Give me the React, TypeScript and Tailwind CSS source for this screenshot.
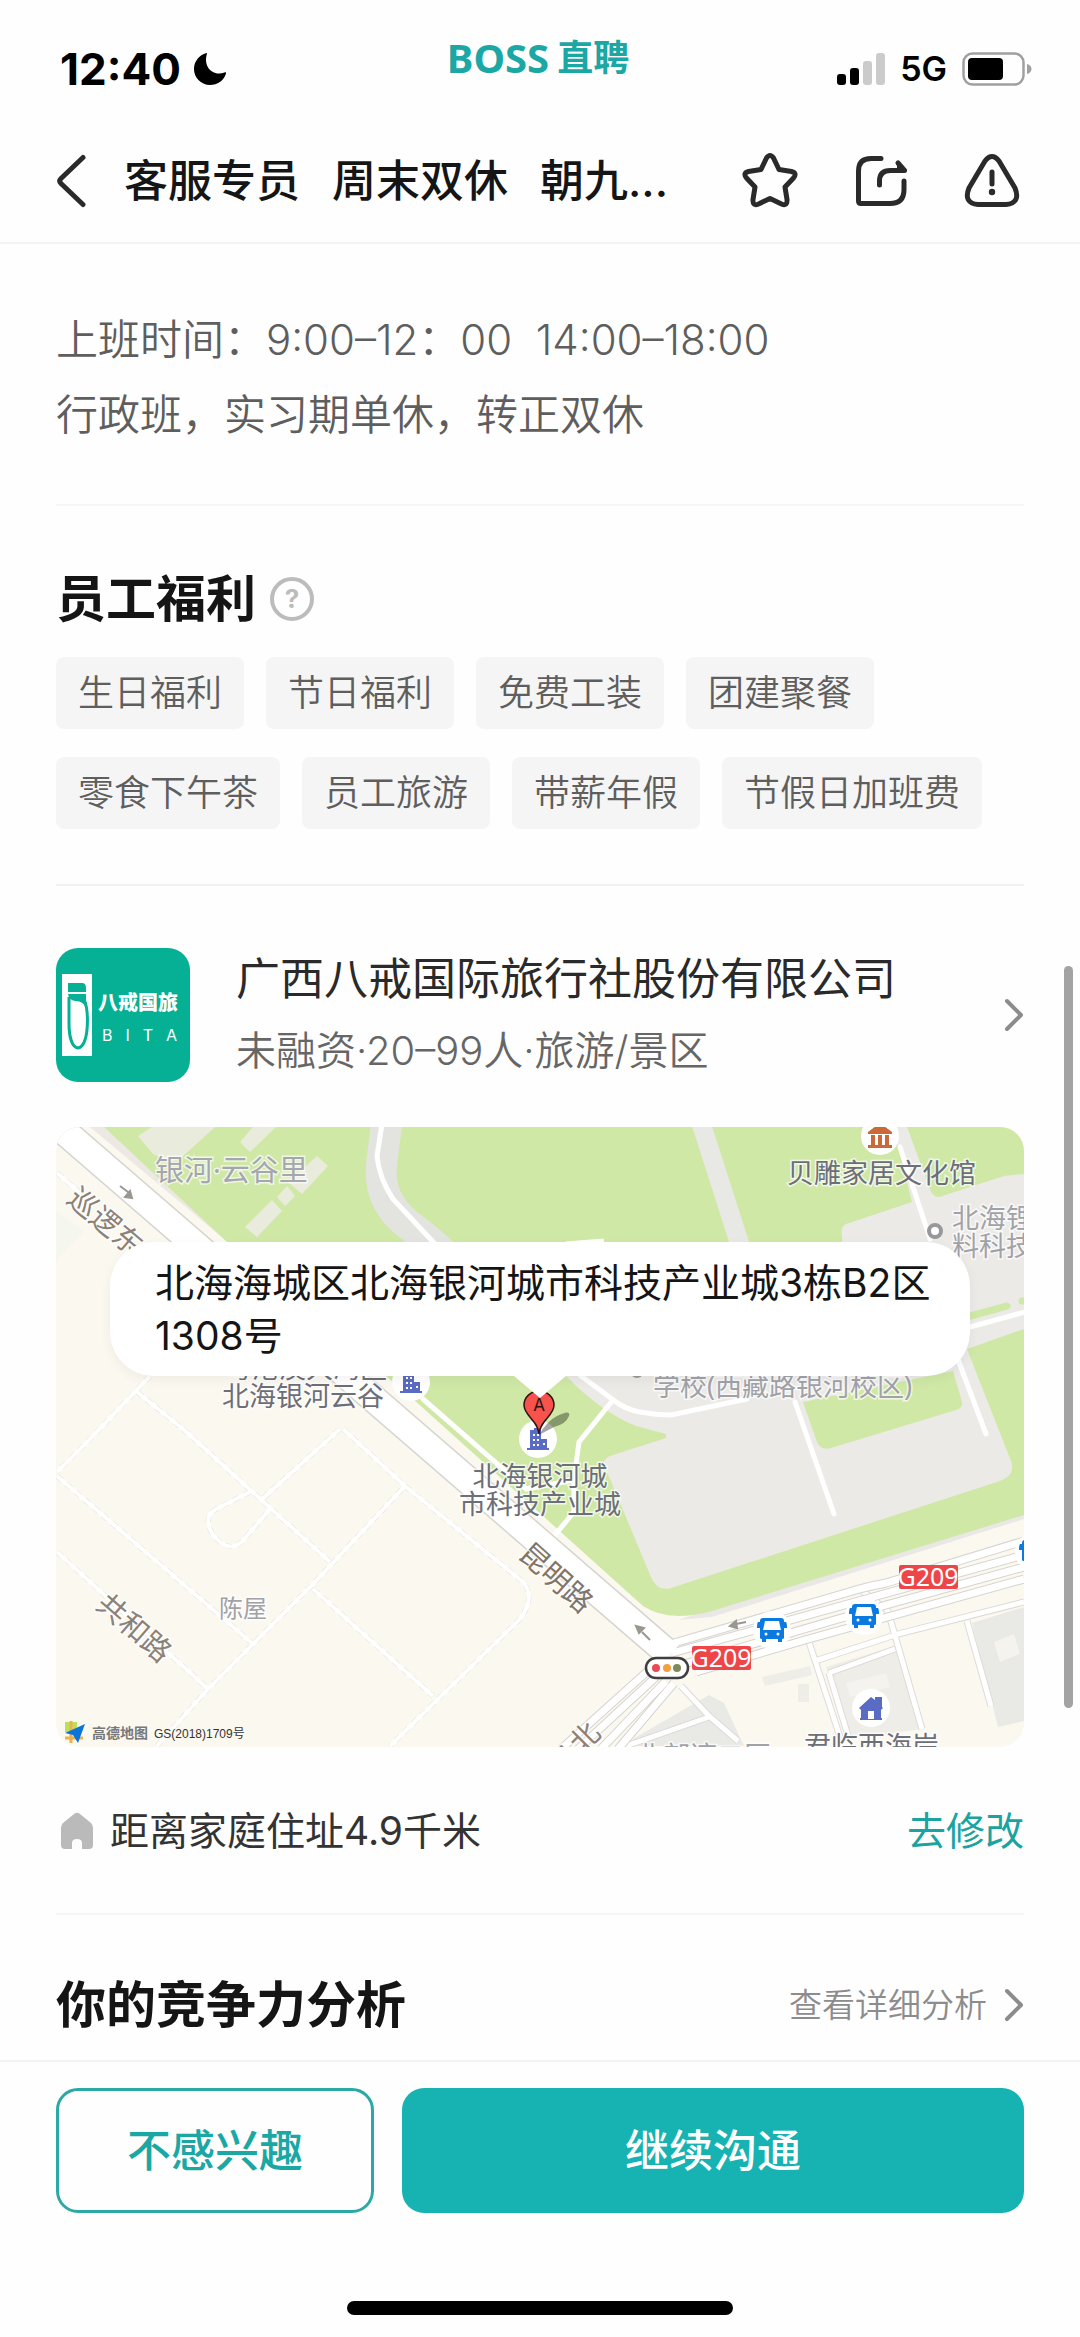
import type { ReactNode } from 'react';

const benefits = [
  '生日福利',
  '节日福利',
  '免费工装',
  '团建聚餐',
  '零食下午茶',
  '员工旅游',
  '带薪年假',
  '节假日加班费',
];

const StatusBar = () => (
  <div className="grid h-[120px] grid-cols-[1fr_auto_1fr] items-center pt-[18px] pl-[60px] pr-12 text-black">
    <div className="flex items-center gap-3">
      <span className="text-[44px] leading-none font-bold">12:40</span>
      <svg viewBox="0 0 34 34" className="h-[34px] w-[34px]" fill="currentColor">
        <path d="M13.500 1C6 3 1 9.500 1 17a16 16 0 0 0 16 16c7.500 0 13.500-4 16-11.500.3-1.200-.6-1.500-1.500-1.100C22 24.500 10.500 17 13.500 3.500c.4-1.600.8-2.300 0-2.500z" />
      </svg>
    </div>
    <div className="flex items-center gap-2 pr-4 pb-[22px] font-bold text-[#1ba8a5]">
      <span className="font-['Noto_Sans'] text-[40px] leading-none">BOSS</span>
      <span className="text-[36px] leading-none">直聘</span>
    </div>
    <div className="flex items-center justify-end gap-[15px]">
      <svg viewBox="0 0 48 32" className="h-8 w-12">
        <rect x="0" y="21" width="9" height="11" rx="3" />
        <rect x="13" y="15" width="9" height="17" rx="3" />
        <rect x="26" y="8" width="9" height="24" rx="3" fill="#cbcbcb" />
        <rect x="39" y="0" width="9" height="32" rx="3" fill="#cbcbcb" />
      </svg>
      <span className="text-[34px] leading-none font-semibold">5G</span>
      <svg viewBox="0 0 70 34" className="h-[34px] w-[70px]">
        <rect x="1.500" y="1.500" width="60" height="31" rx="9" fill="none" stroke="#a0a0a0" strokeWidth="2.500" />
        <rect x="6" y="6" width="35" height="22" rx="4" />
        <path d="M65 12c3 .5 4.500 3 4.500 5s-1.500 4.500-4.500 5z" fill="#a0a0a0" />
      </svg>
    </div>
  </div>
);

const IconButton = ({ label, children }: { label: string; children: ReactNode }) => (
  <button type="button" aria-label={label} className="h-14 w-14 shrink-0">
    <svg
      viewBox="0 0 56 56"
      className="h-14 w-14"
      fill="none"
      stroke="#2a2a2a"
      strokeWidth="5"
      strokeLinecap="round"
      strokeLinejoin="round"
    >
      {children}
    </svg>
  </button>
);

const NavBar = () => (
  <nav className="flex h-[124px] items-center border-b-2 border-[#f3f3f3] pl-14 pr-[60px]">
    <button type="button" aria-label="返回" className="shrink-0">
      <svg viewBox="0 0 30 54" className="h-[54px] w-[30px]" fill="none" stroke="#2a2a2a" strokeWidth="5" strokeLinecap="round" strokeLinejoin="round">
        <path d="M27 3.500L5 24.500q-2.500 2.500 0 5L27 50.500" />
      </svg>
    </button>
    <h1 className="ml-[38px] flex min-w-0 flex-1 gap-8 whitespace-nowrap text-[44px] font-medium text-[#151515]">
      <span>客服专员</span>
      <span>周末双休</span>
      <span>朝九...</span>
    </h1>
    <div className="flex gap-[55px]">
      <IconButton label="收藏">
        <path d="M24.500 5q3.500-5 7 0l5.500 11.500 12.500 2q6 1.500 2 6.500l-8.500 9 2 12.500q.5 7-5.500 4.500L28 45.500 16.500 51q-6 2.500-5.500-4.500l2-12.500-8.500-9q-4-5 2-6.500l12.500-2z" />
      </IconButton>
      <IconButton label="分享">
        <path d="M28 5.500H18Q5.500 5.500 5.500 18v30q0 2.500 2.500 2.500h29q14 0 14-14V28" />
        <path d="M26.500 32v-4q0-10.500 11-10.500h14L45 10" />
        <path d="M45 9l8 8.500h-8z" fill="#2a2a2a" strokeWidth="2" />
      </IconButton>
      <IconButton label="举报">
        <path d="M21 8q7-9 14 0l16 27q6 15-9 16.500H14Q-1 50 5 35z" />
        <path d="M28 19v12" />
        <circle cx="28" cy="39" r="3.200" fill="#2a2a2a" stroke="none" />
      </IconButton>
    </div>
  </nav>
);

const Chevron = () => (
  <svg viewBox="0 0 20 34" className="h-[34px] w-5 shrink-0" fill="none" stroke="#8c8c8c" strokeWidth="4" strokeLinecap="round" strokeLinejoin="round">
    <path d="M3 3l14 14L3 31" />
  </svg>
);

const CompanyLogo = () => (
  <div className="flex h-[134px] w-[134px] shrink-0 items-center gap-[6px] rounded-[22px] bg-[#05b094] pr-[9px] pl-[6px]">
    <svg viewBox="0 0 30 82" className="h-[82px] w-[30px] shrink-0">
      <path fill="#fff" d="M0 0h30v82H0z" />
      <path fill="#05b094" d="M6 9h14q4 0 4 5v4H6z" />
      <path fill="none" stroke="#05b094" strokeWidth="3" d="M7 23c0 10 0 12 0 26 0 14 3 24 9 25 5-1 8-9 9-18 1-12 0-24-3-31" />
      <path fill="#05b094" d="M6 20h18v14q-3-7-10-7t-8-7z" />
    </svg>
    <div className="flex flex-1 flex-col gap-1 text-white">
      <span className="text-[20px] leading-[36px] font-black whitespace-nowrap">八戒国旅</span>
      <span className="flex justify-between px-1 text-[16px] leading-[20px]">
        <span>B</span>
        <span>I</span>
        <span>T</span>
        <span>A</span>
      </span>
    </div>
  </div>
);

const Bus = ({ x, y }: { x: number; y: number }) => (
  <g transform={`translate(${x} ${y})`}>
    <circle r="19" fill="#fff" />
    <path
      fill="#0b7ae0"
      d="M-9-12H9q3 0 3 3v1h2q1 1 1 6h-3V8q0 1-2 1v3H6V9H-6v3h-4V9q-2 0-2-1V-2h-3q0-5 1-6h2v-1q0-3 3-3z"
    />
    <path fill="#fff" d="M-7-9H7l2 9H-9z" />
    <circle cx="-6" cy="4" r="1.500" fill="#fff" />
    <circle cx="6" cy="4" r="1.500" fill="#fff" />
  </g>
);

const Building = ({ x, y }: { x: number; y: number }) => (
  <g transform={`translate(${x} ${y})`}>
    <circle r="19" fill="#fff" />
    <path fill="#5a6bc4" d="M-8-9h4v-2h4v2h3V0h6v9h2v2h-22V9h3z" />
    <path fill="#fff" d="M-5-5h2v2h-2zM-1-5h2v2h-2zM-5 0h2v2h-2zM-1 0h2v2h-2zM-5 5h2v2h-2zM-1 5h2v2h-2zM5 4h2v2h-2z" />
  </g>
);

const RoadBadge = ({ x, y }: { x: number; y: number }) => (
  <g>
    <rect x={x} y={y} width="59" height="24" rx="2" fill="#ee4648" />
    <text x={x + 29} y={y + 21} fontSize="25" fill="#fff" textAnchor="middle" className="font-['Noto_Sans']">
      G209
    </text>
  </g>
);

const mainRoads =
  'M611 518L800 463Q806 461 830 456L968 414M616 526L968 428M640 545L749 513 968 452M625 538L830 478 968 440';
const sideRoads =
  'M753 515L784 610M759 534L842 507 968 475M911 494L935 579M625 559L653 589 682 614M653 590L570 619M804 462L832 484 842 519 866 602M773 546L839 522M773 546L793 612';
const southRoads = 'M594 542L505 622M602 548L522 622M610 554L545 622M618 556L562 622';
const footPaths =
  'M1 349L197 517M101 619L152 562 257 457 349 359M1 425L152 562M127 302L274 435M284 302L204 374M81 265L127 302M94 249L34 312 1 345M287 302L349 359 467 455Q480 470 464 492L334 619M257 462L377 569M194 365L160 382Q146 390 157 408 175 430 190 410L214 382M1 46L24 66';

const Map = () => (
  <svg viewBox="0 0 968 620" className="block h-auto w-full" role="img" aria-label="公司位置地图">
    <path fill="#fbf8ef" d="M0 0h968v620H0z" />
    <path fill="#f5f6ee" d="M0 84l28 20L0 134z" />
    <path fill="#ece9e4" d="M34 0h18l148 122h-20z" />

    {/* park and campus ground */}
    <path fill="#e9e8e6" d="M968 380v12L656 490l-34 3z" />
    <path fill="#cfe8a6" d="M48 0h920v388L656 484q-44 12-69-5L357 272 171 115z" />
    <path
      fill="#ebeae7"
      d="M510 249q35 36 70 50l30 8v4l-56 18q-9 4-5 11l46 110q6 15 20 11l329-107q16-6 11-20L911 222l57-20V47l-20 2-65 21q-5 0-8-5L851 0h-14l19 75-66 22q-6 3-4 12l3 140z"
    />
    <path fill="#cfe8a6" d="M747 275l150-31 9 31q1 6-6 8l-125 38q-10 3-14-6z" />
    <path fill="none" stroke="#cfe8a6" strokeWidth="7" strokeLinecap="round" d="M900 193l51-14M966 174h4" />
    <path fill="none" stroke="#e3e3e0" strokeWidth="31" d="M331-5C325 40 322 50 330 70c12 26 30 30 56 56" />
    <path fill="none" stroke="#e8e8e4" strokeWidth="19" d="M645-4l40 125" />
    <path fill="#e9ecdc" d="M82 9L96 0h63l-32 29-13 6-17-8zM184 15l13-15h23l-26 25zM261 29l11 10-26 28-14-12zM231 59l8 10-10 10-8-9zM216 73l10 11-25 26-12-10z" />

    <g fill="none" stroke="#fff" strokeWidth="5" strokeLinecap="round">
      <path d="M326-3L321 29q2 22 16 43l42 45" />
      <path d="M844 20l30 92M739 275l39 112M898 222l32 85M914 200l55-15" />
      <path d="M525 249l31 23q12 10 28 13t31 3l76-16M557 273l-34 42-5 37v33l-25 30M367 272l103 90 48-9" />
    </g>
    <path fill="none" stroke="#fff" strokeWidth="9" d="M510 119l38-3" />

    {/* built-up blocks */}
    <path fill="#e9e9e6" d="M916 496l52-16v114l-26 6zM577 612l76-44 15 8 20 43H577z" />
    <path fill="#eeede8" d="M770 540l69-21 27 83-76 10zM706 550l48-11 2 9-47 11zM742 557h11v18h-11z" />
    <path fill="#f4f3ee" d="M790 556l40-10 4 14-40 10zM938 515l20-8 6 20-20 8z" />

    <g fill="none">
      <path stroke="#e3e1dd" strokeWidth="5" strokeDasharray="7 5" d={footPaths} />
      <path stroke="#fff" strokeWidth="4" d={footPaths} />
      <path stroke="#dddbd7" strokeWidth="7" d={sideRoads} />
      <path stroke="#fff" strokeWidth="5" d={sideRoads} />
      <path stroke="#d6d4d0" strokeWidth="29" d="M-20-20L614 528" />
      <path stroke="#d6d4d0" strokeWidth="9" d={southRoads} />
      <path stroke="#d6d4d0" strokeWidth="9" d={mainRoads} />
      <path stroke="#fff" strokeWidth="26" d="M-20-20L614 528" />
      <path stroke="#fff" strokeWidth="7" d={southRoads} />
      <path stroke="#fff" strokeWidth="7" d={mainRoads} />
    </g>
    <g fill="#9a9791" stroke="#9a9791" strokeWidth="2">
      <path d="M64 59l8 6M76 71l-7-1 5-6zM594 513l-8-8M580 499l8 2-5 5zM690 495l-10 2M674 499l6-5 1 7z" />
    </g>

    <g className="font-['Noto_Sans','Noto_Sans_CJK_SC',sans-serif]" fontSize="27" stroke="#fff" strokeOpacity="0.7" strokeWidth="3" paintOrder="stroke">
      <text x="99" y="54" fontSize="29" fill="#a5a6ae">银河·云谷里</text>
      <g fill="#8a8178" fontSize="29" textAnchor="middle">
        <text transform="translate(49 95) rotate(40)" y="10">巡逻东</text>
        <text transform="translate(500 451) rotate(42)" y="10" fill="#80756a">昆明路</text>
        <text transform="translate(78 501) rotate(41)" y="10">共和路</text>
        <text transform="translate(529 611) rotate(-45)" y="10">北</text>
        <text transform="translate(506 636) rotate(-45)" y="10">湖</text>
      </g>
      <g fill="#6c6e78">
        <text x="169" y="251">粤港澳大湾区</text>
        <text x="166" y="279">北海银河云谷</text>
        <text x="484" y="359" textAnchor="middle">北海银河城</text>
        <text x="484" y="387" textAnchor="middle">市科技产业城</text>
        <text x="731" y="56">贝雕家居文化馆</text>
        <text x="748" y="629">君临西海岸</text>
      </g>
      <g fill="#a1a2a8">
        <text x="896" y="101">北海锂</text>
        <text x="896" y="129">料科技</text>
        <text x="597" y="269">学校(西藏路银河校区)</text>
        <text x="580" y="639">北部湾二区</text>
        <text x="163" y="490" fontSize="24">陈屋</text>
      </g>
    </g>
    <circle cx="879" cy="104" r="6" fill="#fff" stroke="#98989c" strokeWidth="4" />
    <circle cx="581" cy="245" r="6" fill="#98989c" />

    <g transform="translate(824 9)">
      <circle r="19" fill="#fff" />
      <path fill="#c96a38" d="M-12-4L0-13 12-4v2H-12zM-9-1h4v10h-4zM-2-1h4v10h-4zM5-1h4v10H5zM-12 9h24v3h-24z" />
    </g>
    <Building x={355} y={255} />
    <Building x={482} y={312} />
    <Bus x={716} y={503} />
    <Bus x={808} y={489} />
    <Bus x={978} y={425} />
    <g transform="translate(815 581)">
      <circle r="19" fill="#fff" />
      <path fill="#5a6bc4" d="M-12 0L0-11l4 3v-3h7v10l1 1-2 2v8h1v2h-22v-2h1V2z" />
      <path fill="#fff" d="M-3 3h6v8h-6z" />
    </g>
    <RoadBadge x={843} y={438} />
    <RoadBadge x={636} y={519} />
    <rect x="590" y="531" width="42" height="20" rx="10" fill="#fff" stroke="#3f3f3f" strokeWidth="2.500" />
    <circle cx="600" cy="541" r="4" fill="#ea4a55" />
    <circle cx="611" cy="541" r="4" fill="#f0a040" />
    <circle cx="621" cy="541" r="4" fill="#7d8a5a" />

    {/* pin */}
    <path fill="#000" fillOpacity="0.350" d="M483 308q8-14 18-19 14-7 12 0-3 8-15 11z" />
    <path fill="#f8524d" stroke="#2b1512" strokeWidth="1.500" d="M483 307c-1-14-15-18-15-29a15 14 0 0 1 30 0c0 11-14 15-15 29z" />
    <text x="483" y="284" fontSize="17" textAnchor="middle" fill="#2b1512">A</text>

    <g>
      <path fill="#bde05c" d="M9 595h12v10H9z" />
      <path stroke="#f0b050" strokeWidth="3" d="M9 611h18M15 594v22" />
      <path fill="#0c74d8" d="M29 597L9 606l8 2 5 8z" />
      <text x="36" y="611" fontSize="14" fontWeight="700" fill="#77787c">高德地图</text>
      <text x="98" y="611" fontSize="12" fill="#333" className="font-['Liberation_Sans','Noto_Sans_CJK_SC',sans-serif]">GS(2018)1709号</text>
    </g>
  </svg>
);

const MapCard = () => (
  <div className="relative mt-10 overflow-hidden rounded-3xl">
    <Map />
    <div className="absolute top-[115px] right-[54px] left-[54px] rounded-[44px] bg-white py-[14px] pr-5 pl-[45px] shadow-[0_4px_12px_rgba(0,0,0,0.05)]">
      <p className="text-[39px] leading-[53px] text-[#151515]">北海海城区北海银河城市科技产业城3栋B2区1308号</p>
      <svg viewBox="0 0 52 22" className="absolute top-full left-1/2 -ml-[26px] h-[22px] w-[52px]">
        <path d="M0 0h52L26 22z" fill="#fff" />
      </svg>
    </div>
  </div>
);

const App = () => (
  <div className="flex min-h-screen flex-col bg-[#fefefe] font-['Inter','Noto_Sans_CJK_SC',sans-serif]">
    <header>
      <StatusBar />
      <NavBar />
    </header>

    <main className="relative flex-1 px-14">
      <section className="border-b-2 border-[#f6f6f6] pt-[58px] pb-[52px] text-[42px] leading-[75px] font-[350] text-[#5e5e5e]">
        <p className="whitespace-pre-wrap">上班时间：9:00–12：00{'  '}14:00–18:00</p>
        <p>行政班，实习期单休，转正双休</p>
      </section>

      <section className="border-b-2 border-[#f1f1f1] pt-[63px] pb-[55px]">
        <div className="flex items-center gap-[14px]">
          <h2 className="text-[50px] leading-[60px] font-bold text-[#151515]">员工福利</h2>
          <button type="button" aria-label="福利说明" className="h-11 w-11 rounded-full border-4 border-[#bcbcbc] text-[26px] leading-none font-bold text-[#bcbcbc]">
            ?
          </button>
        </div>
        <ul className="mt-7 flex flex-wrap gap-x-[22px] gap-y-7">
          {benefits.map((benefit) => (
            <li key={benefit} className="rounded-lg bg-[#f5f5f5] px-[22px] text-[36px] leading-[72px] font-[350] text-[#5e5e5e]">
              {benefit}
            </li>
          ))}
        </ul>
      </section>

      <section className="border-b-2 border-[#f6f6f6] pt-[57px] pb-[54px]">
        <a href="#company" className="flex items-center">
          <CompanyLogo />
          <div className="ml-[46px] min-w-0 flex-1">
            <h3 className="text-[44px] leading-[72px] text-[#2a2a2a]">广西八戒国际旅行社股份有限公司</h3>
            <p className="text-[40px] leading-[72px] font-[350] text-[#666]">未融资·20–99人·旅游/景区</p>
          </div>
          <Chevron />
        </a>
        <MapCard />
        <div className="mt-14 flex items-center text-[39px] leading-[56px]">
          <svg viewBox="0 0 34 38" className="ml-1 h-[38px] w-[34px]" fill="#bababa">
            <path d="M14 2q3-2.500 6 0l11 9q2 2 2 5v17q0 4-4 4h-7v-6q0-4-5-4t-5 4v6H5q-4 0-4-4V16q0-3 2-5z" />
          </svg>
          <p className="ml-4 flex-1 text-[#333]">距离家庭住址4.9千米</p>
          <a href="#address" className="text-[#1ba3a1]">去修改</a>
        </div>
      </section>

      <section className="flex items-center pt-[60px] pb-6">
        <h2 className="flex-1 text-[50px] leading-[60px] font-bold text-[#151515]">你的竞争力分析</h2>
        <a href="#analysis" className="flex items-center gap-[17px] text-[33px] leading-[60px] font-[350] text-[#8c8c8c]">
          查看详细分析
          <Chevron />
        </a>
      </section>

      <div className="absolute top-[722px] right-[7px] h-[742px] w-[9px] rounded-full bg-[#a3a3a3]" />
    </main>

    <footer className="border-t-2 border-[#f3f3f3] px-14 pt-[26px] pb-[22px]">
      <div className="grid grid-cols-[318fr_622fr] gap-7 text-[44px] font-medium">
        <button type="button" className="h-[125px] rounded-[22px] border-3 border-[#2ba9a7] text-[#1ba8a5]">
          不感兴趣
        </button>
        <button type="button" className="h-[125px] rounded-[22px] bg-[#16b3b2] text-white">
          继续沟通
        </button>
      </div>
      <div className="mx-auto mt-[88px] h-[14px] w-[386px] rounded-full bg-black" />
    </footer>
  </div>
);

export default App;
